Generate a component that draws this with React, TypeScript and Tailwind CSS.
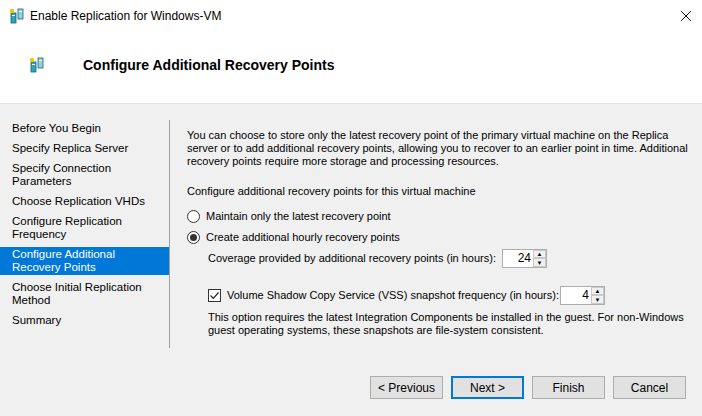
import React from 'react';

const Icon: React.FC<{ size?: number }> = ({ size = 16 }) => (
  <svg width={size} height={size} viewBox="0 0 16 16">
    <rect x="2" y="5" width="5" height="10" fill="#2aa6b8" stroke="#1d5f6e" strokeWidth="0.8" />
    <rect x="9" y="1" width="5" height="10" fill="#8fd3e0" stroke="#1d5f6e" strokeWidth="0.8" />
    <rect x="3" y="7" width="3" height="1" fill="#fff" />
    <rect x="10" y="3" width="3" height="1" fill="#fff" />
    <circle cx="3" cy="3" r="2.2" fill="#f5c400" />
  </svg>
);

const Spin: React.FC<{ value: string }> = ({ value }) => (
  <div className="flex h-[19px] w-[45px] border border-[#adadad] bg-white">
    <div className="flex-1 text-right pr-[2px] text-[12px] leading-[17px]">{value}</div>
    <div className="flex w-[13px] flex-col">
      <div className="flex h-[8px] items-center justify-center border border-[#c9c9c9] bg-[#f0f0f0] text-[6px] leading-none">▲</div>
      <div className="flex h-[9px] items-center justify-center border border-[#c9c9c9] bg-[#f0f0f0] text-[6px] leading-none">▼</div>
    </div>
  </div>
);

const Btn: React.FC<{ label: string; primary?: boolean }> = ({ label, primary }) => (
  <div className={`flex h-[23px] w-[73px] items-center justify-center bg-[#e1e1e1] text-[12px] ${primary ? 'border-2 border-[#0078d7]' : 'border border-[#adadad]'}`}>
    {label}
  </div>
);

const steps = [
  ['Before You Begin'],
  ['Specify Replica Server'],
  ['Specify Connection', 'Parameters'],
  ['Choose Replication VHDs'],
  ['Configure Replication', 'Frequency'],
  ['Configure Additional', 'Recovery Points'],
  ['Choose Initial Replication', 'Method'],
  ['Summary'],
];

const App: React.FC = () => (
  <div className="h-[416px] w-[702px] overflow-hidden bg-[#f0f0f0] text-[11px] text-black" style={{ fontFamily: '"Liberation Sans", Arial, sans-serif' }}>
    <div className="bg-white">
      <div className="flex h-[31px] items-center pl-[9px]">
        <Icon />
        <span className="ml-[5px] text-[12px]">Enable Replication for Windows-VM</span>
        <svg className="ml-auto mr-[10px]" width="12" height="12" viewBox="0 0 12 12"><path d="M1 1 L11 11 M11 1 L1 11" stroke="#111" strokeWidth="1" /></svg>
      </div>
      <div className="flex h-[72px] items-center pl-[29px] pb-[4px]">
        <Icon />
        <span className="ml-[38px] text-[14px] font-bold">Configure Additional Recovery Points</span>
      </div>
    </div>
    <div className="h-px bg-[#e3e3e3]" />
    <div className="flex h-[244px] pt-[16px]">
      <div className="w-[170px] border-r border-[#a0a0a0] pt-[1px] text-[11.5px]">
        {steps.map((s, i) => (
          <div key={i} className={`px-[12px] py-[1px] leading-[13px] ${i === 5 ? 'bg-[#0078d7] text-white' : ''}`} style={{ marginBottom: i === 7 ? 0 : 5 }}>
            {s.map(l => <div key={l}>{l}</div>)}
          </div>
        ))}
      </div>
      <div className="flex-1 pl-[17px] pr-[14px] pt-[9px] leading-[13px]">
        <p>You can choose to store only the latest recovery point of the primary virtual machine on the Replica server or to add additional recovery points, allowing you to recover to an earlier point in time. Additional recovery points require more storage and processing resources.</p>
        <p className="mt-[17px]">Configure additional recovery points for this virtual machine</p>
        <div className="mt-[12px] flex items-center gap-[6px]">
          <span className="h-[13px] w-[13px] rounded-full border border-[#333] bg-white" />
          <span>Maintain only the latest recovery point</span>
        </div>
        <div className="mt-[8px] flex items-center gap-[6px]">
          <span className="flex h-[13px] w-[13px] items-center justify-center rounded-full border border-[#333] bg-white">
            <span className="h-[7px] w-[7px] rounded-full bg-[#333]" />
          </span>
          <span>Create additional hourly recovery points</span>
        </div>
        <div className="mt-[5px] flex items-center pl-[21px]">
          <span className="w-[294px] whitespace-nowrap">Coverage provided by additional recovery points (in hours):</span>
          <Spin value="24" />
        </div>
        <div className="mt-[18px] flex items-center pl-[21px]">
          <span className="flex h-[13px] w-[13px] items-center justify-center border border-[#333] bg-white">
            <svg width="11" height="11" viewBox="0 0 11 11"><path d="M1.5 5.5 L4.3 8.3 L9.5 2.5" fill="none" stroke="#222" strokeWidth="1.2" /></svg>
          </span>
          <span className="ml-[6px] w-[333px] whitespace-nowrap">Volume Shadow Copy Service (VSS) snapshot frequency (in hours):</span>
          <Spin value="4" />
        </div>
        <p className="mt-[6px] pl-[21px]">This option requires the latest Integration Components be installed in the guest. For non-Windows guest operating systems, these snapshots are file-system consistent.</p>
      </div>
    </div>
    <div className="flex justify-end gap-[8px] pr-[16px] pt-[28px]">
      <Btn label="< Previous" />
      <Btn label="Next >" primary />
      <Btn label="Finish" />
      <Btn label="Cancel" />
    </div>
  </div>
);

export default App;
